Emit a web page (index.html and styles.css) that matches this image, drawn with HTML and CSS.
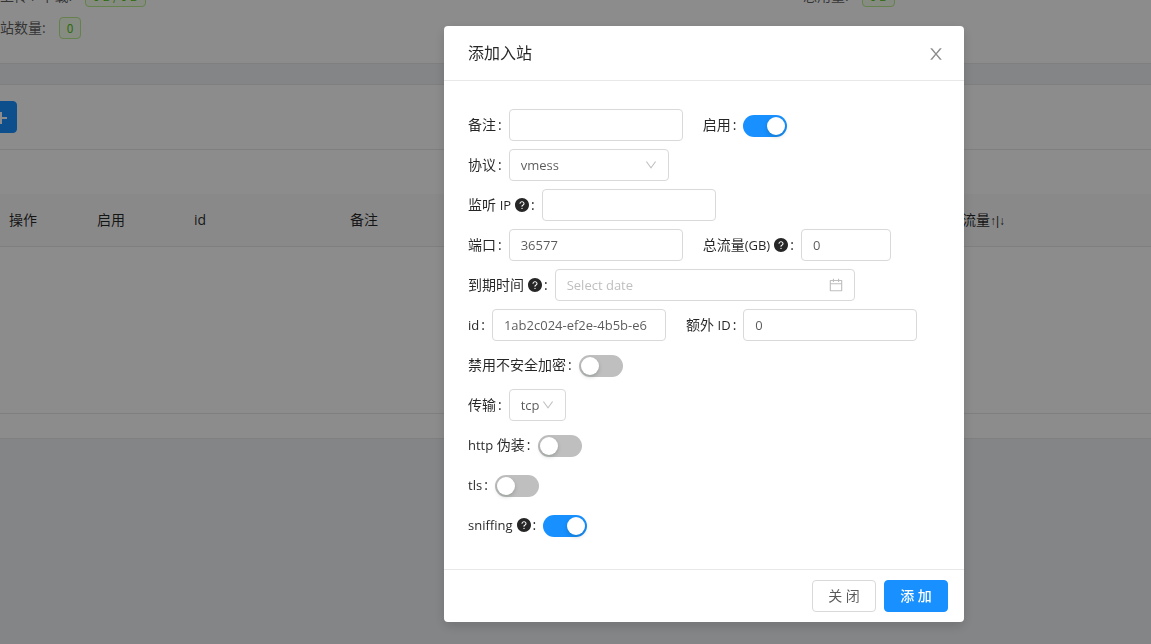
FILE: index.html
```html
<!DOCTYPE html>
<html lang="zh-CN">
<head>
<meta charset="utf-8">
<title>添加入站</title>
<link rel="stylesheet" href="styles.css">
</head>
<body>
<svg class="symbols" aria-hidden="true">
  <symbol id="question" viewBox="64 64 896 896"><path d="M512 64C264.600 64 64 264.600 64 512s200.600 448 448 448 448-200.600 448-448S759.400 64 512 64zm0 708c-22.100 0-40-17.900-40-40s17.900-40 40-40 40 17.900 40 40-17.900 40-40 40zm62.900-219.500a48.300 48.300 0 0 0-30.900 44.800V620c0 4.400-3.600 8-8 8h-48c-4.400 0-8-3.600-8-8v-21.500c0-23.100 6.700-45.900 19.900-64.900 12.900-18.600 30.900-32.800 52.100-40.900 34-13.100 56-41.600 56-72.700 0-44.100-43.100-80-96-80s-96 35.900-96 80v7.600c0 4.400-3.600 8-8 8h-48c-4.400 0-8-3.600-8-8V420c0-39.300 17.200-76 48.400-103.300C430.400 290.400 470 276 512 276s81.600 14.500 111.600 40.700C654.800 344 672 380.700 672 420c0 57.800-38.100 109.800-97.100 132.500z"/></symbol>
  <symbol id="down" viewBox="64 64 896 896"><path d="M884 256h-75c-5.100 0-9.900 2.500-12.900 6.600L512 654.200 227.900 262.600c-3-4.100-7.800-6.600-12.900-6.600h-75c-6.500 0-10.300 7.400-6.500 12.700l352.600 486.100c12.800 17.600 39 17.600 51.700 0l352.600-486.100c3.900-5.300.1-12.700-6.400-12.700z"/></symbol>
  <symbol id="calendar" viewBox="64 64 896 896"><path d="M880 184H712v-64c0-4.400-3.600-8-8-8h-56c-4.400 0-8 3.600-8 8v64H384v-64c0-4.400-3.600-8-8-8h-56c-4.400 0-8 3.600-8 8v64H144c-17.700 0-32 14.300-32 32v664c0 17.700 14.300 32 32 32h736c17.700 0 32-14.300 32-32V216c0-17.700-14.300-32-32-32zm-40 656H184V460h656v380zM184 392V256h128v48c0 4.400 3.600 8 8 8h56c4.400 0 8-3.600 8-8v-48h256v48c0 4.400 3.600 8 8 8h56c4.400 0 8-3.600 8-8v-48h128v136H184z"/></symbol>
  <symbol id="close" viewBox="64 64 896 896"><path d="M563.800 512l262.500-312.900c4.400-5.200.7-13.100-6.100-13.100h-79.800c-4.700 0-9.200 2.100-12.300 5.700L511.600 449.800 295.100 191.700c-3-3.600-7.500-5.700-12.300-5.700H203c-6.800 0-10.500 7.900-6.100 13.100L459.400 512 196.900 824.900A7.950 7.950 0 0 0 203 838h79.800c4.700 0 9.200-2.100 12.300-5.700l216.500-258.100 216.500 258.100c3 3.600 7.500 5.700 12.300 5.700h79.800c6.800 0 10.500-7.900 6.100-13.100L563.800 512z"/></symbol>
  <symbol id="plus" viewBox="0 0 14 14"><path d="M6 2h2v5h5v2H8v5H6V9H1V7h5z"/></symbol>
</svg>

<main class="page">
  <section class="card stats">
    <div class="stat"><span>总上传 / 下载:</span><span class="tag">0 B / 0 B</span></div>
    <div class="stat"><span>总用量:</span><span class="tag">0 B</span></div>
    <div class="stat"><span>入站数量:</span><span class="tag">0</span></div>
  </section>
  <section class="card">
    <div class="toolbar"><button class="btn btn-primary btn-icon" type="button" aria-label="添加入站"><svg class="icon"><use href="#plus"/></svg></button></div>
    <table class="inbounds">
      <thead>
        <tr><th class="col-expand"></th><th class="col-action">操作</th><th class="col-enable">启用</th><th class="col-id">id</th><th class="col-remark">备注</th><th>总流量<span class="arrows">↑|↓</span></th></tr>
      </thead>
      <tbody><tr><td colspan="6"></td></tr></tbody>
    </table>
  </section>
</main>

<div class="mask">
  <form class="modal" role="dialog" aria-labelledby="modal-title">
    <header class="modal-header">
      <h1 id="modal-title">添加入站</h1>
      <button class="modal-close" type="button" aria-label="关闭窗口"><svg class="icon-lg"><use href="#close"/></svg></button>
    </header>
    <div class="modal-body">
      <div class="row">
        <div class="item"><label for="remark">备注</label><input class="field" id="remark" type="text"></div>
        <div class="item"><label for="enable">启用</label><input class="switch" id="enable" type="checkbox" role="switch" checked></div>
      </div>
      <div class="row">
        <div class="item"><label for="protocol">协议</label><span class="select-box select-wide"><select class="field" id="protocol"><option>vmess</option></select><svg class="affix"><use href="#down"/></svg></span></div>
      </div>
      <div class="row">
        <div class="item"><label for="listen"><span>监听 <span class="latin">IP</span></span><svg class="icon help"><use href="#question"/></svg></label><input class="field" id="listen" type="text"></div>
      </div>
      <div class="row">
        <div class="item"><label for="port">端口</label><input class="field" id="port" type="number" value="36577"></div>
        <div class="item"><label for="total"><span>总流量<span class="latin">(GB)</span></span><svg class="icon help"><use href="#question"/></svg></label><input class="field field-short" id="total" type="number" value="0"></div>
      </div>
      <div class="row">
        <div class="item"><label for="expiry">到期时间<svg class="icon help"><use href="#question"/></svg></label><span class="select-box date-box"><input class="field" id="expiry" type="text" placeholder="Select date"><svg class="affix affix-date"><use href="#calendar"/></svg></span></div>
      </div>
      <div class="row">
        <div class="item"><label for="uuid"><span class="latin">id</span></label><input class="field" id="uuid" type="text" value="1ab2c024-ef2e-4b5b-e6"></div>
        <div class="item"><label for="alter"><span>额外 <span class="latin">ID</span></span></label><input class="field" id="alter" type="number" value="0"></div>
      </div>
      <div class="row">
        <div class="item"><label for="insecure">禁用不安全加密</label><input class="switch" id="insecure" type="checkbox" role="switch"></div>
      </div>
      <div class="row">
        <div class="item"><label for="network">传输</label><span class="select-box select-narrow"><select class="field" id="network"><option>tcp</option></select><svg class="affix"><use href="#down"/></svg></span></div>
      </div>
      <div class="row">
        <div class="item"><label for="http"><span><span class="latin">http</span> 伪装</span></label><input class="switch" id="http" type="checkbox" role="switch"></div>
      </div>
      <div class="row">
        <div class="item"><label for="tls"><span class="latin">tls</span></label><input class="switch" id="tls" type="checkbox" role="switch"></div>
      </div>
      <div class="row">
        <div class="item"><label for="sniffing"><span class="latin">sniffing</span><svg class="icon help"><use href="#question"/></svg></label><input class="switch" id="sniffing" type="checkbox" role="switch" checked></div>
      </div>
    </div>
    <footer class="modal-footer">
      <button class="btn" type="button">关 闭</button>
      <button class="btn btn-primary" type="button">添 加</button>
    </footer>
  </form>
</div>
</body>
</html>
```
FILE: styles.css
```css
* { box-sizing: border-box; }

body {
  margin: 0;
  height: 100vh;
  overflow: hidden;
  background: #f0f2f5;
  color: rgba(0, 0, 0, .65);
  font: 14px/22px "Open Sans", "Noto Sans CJK SC", sans-serif;
}

button, input, select { font: inherit; color: inherit; }

.symbols { position: absolute; width: 0; height: 0; }
.icon { width: 14px; height: 14px; fill: currentColor; }
.icon-lg { width: 16px; height: 16px; fill: currentColor; }

/* Scrolled page behind the dialog */
.page {
  margin: -16px -24px 0;
  display: flex;
  flex-direction: column;
  gap: 20px;
}
.card { background: #fff; border: 1px solid #e8e8e8; }
.stats {
  display: grid;
  grid-template-columns: 817px 1fr;
  row-gap: 10px;
  padding: 0 0 24px 9px;
}
.stat { display: flex; align-items: center; gap: 13px; height: 22px; }
.tag {
  padding: 0 7px;
  border: 1px solid #b7eb8f;
  border-radius: 4px;
  background: #f6ffed;
  color: #52c41a;
  font-family: "Noto Sans CJK SC", sans-serif;
  font-size: 12px;
  line-height: 20px;
}
.toolbar { padding: 16px 8px; border-bottom: 1px solid #e8e8e8; margin-bottom: 44px; }

.inbounds { width: 100%; table-layout: fixed; border-collapse: separate; border-spacing: 0; margin-bottom: 24px; }
.inbounds th {
  height: 53px;
  padding: 0 16px;
  background: #fafafa;
  border-bottom: 1px solid #e8e8e8;
  color: rgba(0, 0, 0, .85);
  font-weight: 400;
  text-align: left;
}
.inbounds td { height: 167px; border-bottom: 1px solid #e8e8e8; }
.inbounds .col-expand { width: 16px; padding: 0; }
.col-action { width: 88px; }
.col-enable { width: 97px; }
.col-id { width: 156px; }
.col-remark { width: 598px; }
.arrows { font: 12px/22px "Liberation Sans", sans-serif; }

.btn {
  min-width: 64px;
  height: 32px;
  padding: 0 14px;
  border: 1px solid #d9d9d9;
  border-radius: 4px;
  background: #fff;
}
.btn-primary { border-color: #1890ff; background: #1890ff; color: #fff; font-weight: 500; }
.btn-icon { display: flex; align-items: center; justify-content: center; width: 32px; min-width: 0; padding: 0; }

/* Dialog */
.mask {
  position: fixed;
  inset: 0;
  display: flex;
  justify-content: center;
  align-items: flex-start;
  padding: 26px 0 22px 257px;
  background: rgba(0, 0, 0, .45);
}
.modal {
  width: 100%;
  max-width: 520px;
  border-radius: 4px;
  background: #fff;
  box-shadow: 0 4px 12px rgba(0, 0, 0, .15);
}
.modal-header {
  display: flex;
  align-items: center;
  justify-content: space-between;
  padding: 16px 20px 16px 24px;
  border-bottom: 1px solid #e8e8e8;
}
.modal-header h1 { margin: 0; color: rgba(0, 0, 0, .85); font-size: 16px; line-height: 22px; font-weight: 400; }
.modal-close { display: flex; padding: 2px 0 0; border: 0; background: none; color: rgba(0, 0, 0, .45); }
.modal-body { padding: 24px; }
.modal-footer { display: flex; justify-content: flex-end; gap: 8px; padding: 10px 16px; border-top: 1px solid #e8e8e8; }

.row { display: flex; gap: 20px; height: 40px; align-items: center; }
.item { display: flex; align-items: center; }
.item label { display: flex; align-items: center; color: rgba(0, 0, 0, .85); white-space: nowrap; }
.item label::after { content: ":"; margin: 0 7px 0 2px; }
.latin { font-size: 13px; }
.help { margin-left: 4px; }

.field {
  width: 174px;
  height: 32px;
  padding: 4px 11px;
  border: 1px solid #d9d9d9;
  border-radius: 4px;
  background: #fff;
  font-size: 13px;
  appearance: none;
}
.field[type="number"] { appearance: textfield; }
.field::placeholder { color: #bfbfbf; }
.field-short { width: 90px; }
.select-box { position: relative; display: flex; }
.select-box .field { width: 100%; }
.select-wide { width: 160px; }
.select-narrow { width: 57px; }
.date-box { width: 300px; }
.affix { position: absolute; top: 10px; right: 12px; width: 12px; height: 12px; fill: #bfbfbf; pointer-events: none; }
.affix-date { top: 9px; width: 14px; height: 14px; }

.switch {
  display: flex;
  width: 44px;
  height: 22px;
  margin: 2px 0 0;
  padding: 2px;
  border-radius: 11px;
  background: #bfbfbf;
  appearance: none;
}
.switch::before {
  content: "";
  width: 18px;
  height: 18px;
  border-radius: 50%;
  background: #fff;
  box-shadow: 0 2px 4px rgba(0, 35, 11, .2);
}
.switch:checked { justify-content: flex-end; background: #1890ff; }
```
